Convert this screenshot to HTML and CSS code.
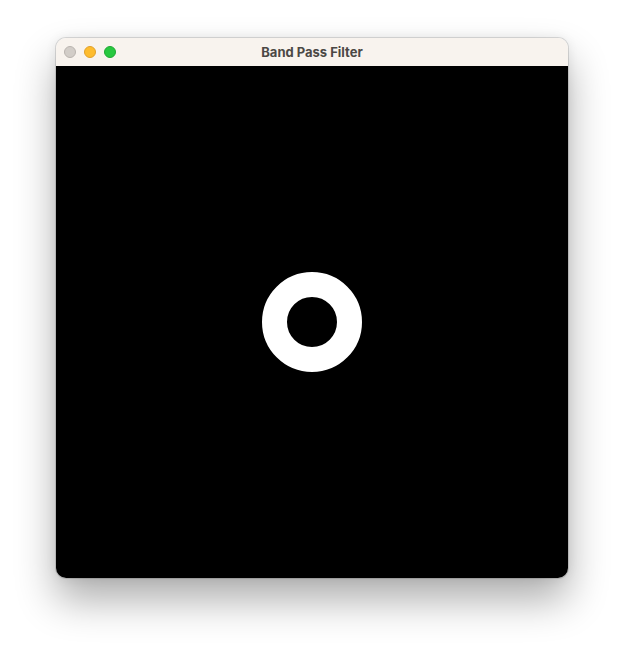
FILE: index.html
```html
<!DOCTYPE html>
<html>
<head>
<meta charset="utf-8">
<link rel="stylesheet" href="styles.css">
</head>
<body>
<div class="stage">
  <div class="window">
    <div class="titlebar">
      <div class="lights">
        <span class="light close"></span>
        <span class="light min"></span>
        <span class="light max"></span>
      </div>
      <div class="title">Band Pass Filter</div>
    </div>
    <div class="canvas">
      <div class="ring"></div>
    </div>
  </div>
</div>
</body>
</html>
```
FILE: styles.css
```css
html, body {
  margin: 0;
  padding: 0;
  background: #ffffff;
}
.stage {
  width: 624px;
  height: 652px;
  padding: 38px 0 0 56px;
  box-sizing: border-box;
}
.window {
  width: 512px;
  border-radius: 10px;
  overflow: hidden;
  box-shadow: 0 0 0 1px rgba(0,0,0,0.12), 0 22px 40px rgba(0,0,0,0.32), 0 0 12px rgba(0,0,0,0.08);
}
.titlebar {
  height: 28px;
  background: #f8f3ee;
  display: grid;
  grid-template-columns: 1fr;
  align-items: center;
}
.lights, .title {
  grid-row: 1;
  grid-column: 1;
}
.lights {
  display: flex;
  gap: 8px;
  padding-left: 8px;
  align-items: center;
}
.light {
  width: 12px;
  height: 12px;
  border-radius: 50%;
  box-sizing: border-box;
}
.close { background: #d2cdc8; border: 0.5px solid #b9b4af; }
.min { background: #febc2e; border: 0.5px solid #e0a02a; }
.max { background: #28c840; border: 0.5px solid #1fa833; }
.title {
  text-align: center;
  font-family: Inter, "Open Sans", sans-serif;
  font-weight: 700;
  font-size: 13px;
  color: #4b4845;
}
.canvas {
  width: 512px;
  height: 512px;
  background: #000000;
  display: grid;
  place-items: center;
}
.ring {
  width: 50px;
  height: 50px;
  border: 25px solid #ffffff;
  border-radius: 50%;
}
```
